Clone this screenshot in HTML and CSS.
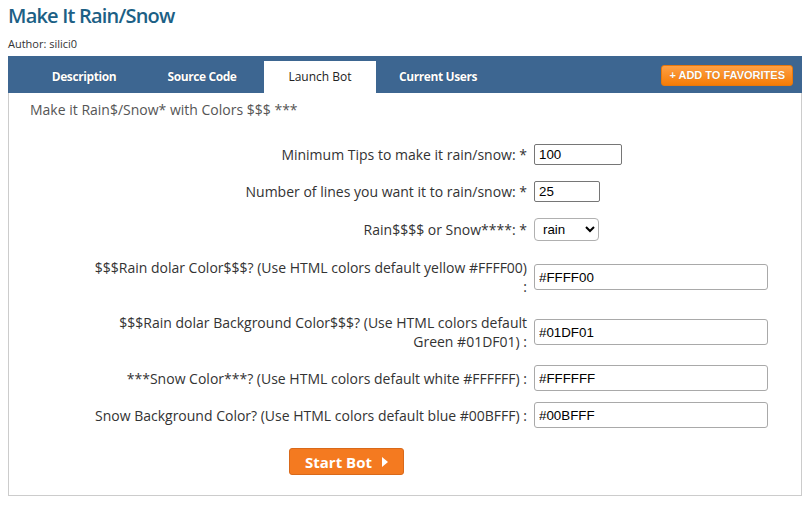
FILE: index.html
```html
<!DOCTYPE html>
<html lang="en">
<head>
    <meta charset="UTF-8">
    <meta name="viewport" content="width=device-width, initial-scale=1.0">
    <title>Make It Rain/Snow</title>
    <link rel="stylesheet" href="styles.css">
</head>
<body>
    <div class="page">
        <h1 class="bot-title">Make It Rain/Snow</h1>
        <p class="author">Author: silici0</p>

        <div class="bot-panel">
            <!-- Tabs -->
            <div class="tab-bar">
                <ul class="tabs">
                    <li><a href="#">Description</a></li>
                    <li><a href="#">Source Code</a></li>
                    <li class="active"><a href="#">Launch Bot</a></li>
                    <li><a href="#">Current Users</a></li>
                </ul>
                <a href="#" class="fav-btn">+ Add to favorites</a>
            </div>

            <!-- Launch form -->
            <div class="tab-content">
                <p class="intro">Make it Rain$/Snow* with Colors $$$ ***</p>

                <form class="bot-form">
                    <label for="minTips">Minimum Tips to make it rain/snow: *</label>
                    <div><input type="text" id="minTips" class="field field-short" value="100"></div>

                    <label for="lines">Number of lines you want it to rain/snow: *</label>
                    <div><input type="text" id="lines" class="field field-tiny" value="25"></div>

                    <label for="mode">Rain$$$$ or Snow****: *</label>
                    <div>
                        <select id="mode" class="field-select">
                            <option>rain</option>
                            <option>snow</option>
                        </select>
                    </div>

                    <label for="rainColor">$$$Rain dolar Color$$$? (Use HTML colors default yellow #FFFF00) :</label>
                    <div><input type="text" id="rainColor" class="field field-wide" value="#FFFF00"></div>

                    <label for="rainBg">$$$Rain dolar Background Color$$$? (Use HTML colors default Green #01DF01) :</label>
                    <div><input type="text" id="rainBg" class="field field-wide" value="#01DF01"></div>

                    <label for="snowColor">***Snow Color***? (Use HTML colors default white #FFFFFF) :</label>
                    <div><input type="text" id="snowColor" class="field field-wide" value="#FFFFFF"></div>

                    <label for="snowBg">Snow Background Color? (Use HTML colors default blue #00BFFF) :</label>
                    <div><input type="text" id="snowBg" class="field field-wide" value="#00BFFF"></div>
                </form>

                <button type="button" class="start-btn">
                    Start Bot
                    <svg width="6" height="10" viewBox="0 0 6 10"><path d="M0 0 L6 5 L0 10 Z" fill="#fff"/></svg>
                </button>
            </div>
        </div>
    </div>
</body>
</html>
```

FILE: styles.css
```css
:root {
    --title-color: #1c6085;
    --text-color: #333333;
    --muted-color: #555555;
    --tab-bar-bg: #3d6691;
    --panel-border: #cccccc;
    --orange: #f47a20;
}

body {
    margin: 0;
    font-family: 'Open Sans', sans-serif;
    color: var(--text-color);
    background: #ffffff;
}

.page {
    padding: 6px 8px;
    width: 794px;
}

.bot-title {
    margin: 0 0 11px;
    font-size: 20px;
    line-height: 20px;
    font-weight: 600;
    letter-spacing: -0.8px;
    color: var(--title-color);
}

.author {
    margin: 0 0 5px;
    font-size: 11px;
    line-height: 14px;
}

/* Tabs */
.tab-bar {
    display: flex;
    justify-content: space-between;
    align-items: flex-start;
    height: 37px;
    padding: 5px 9px 0 20px;
    box-sizing: border-box;
    background-color: var(--tab-bar-bg);
}

.tabs {
    display: flex;
    gap: 6px;
    margin: 0;
    padding: 0;
    list-style: none;
}

.tabs li a {
    display: block;
    width: 112px;
    height: 32px;
    line-height: 32px;
    text-align: center;
    font-size: 12px;
    font-weight: 700;
    letter-spacing: -0.4px;
    color: #ffffff;
    text-decoration: none;
    text-shadow: 0 0 1px rgba(0, 0, 0, 0.4);
}

.tabs li.active a {
    background: #ffffff;
    color: #222222;
    font-weight: 400;
    letter-spacing: 0;
    text-shadow: none;
}

.fav-btn {
    margin-top: 4px;
    height: 21px;
    line-height: 19px;
    padding: 0 7px;
    box-sizing: border-box;
    border: 1px solid #e8780c;
    border-radius: 3px;
    background: linear-gradient(#ffa044, #f57c06);
    font-family: 'Liberation Sans', Arial, sans-serif;
    font-size: 11px;
    font-weight: 700;
    text-transform: uppercase;
    color: #ffffff;
    text-decoration: none;
    text-shadow: 0 0 1px rgba(0, 0, 0, 0.25);
}

/* Content */
.tab-content {
    border: 1px solid var(--panel-border);
    border-top: none;
    padding: 7px 21px 20px;
}

.intro {
    margin: 0 0 22px;
    font-size: 14px;
    line-height: 19px;
    color: var(--muted-color);
}

.bot-form {
    display: grid;
    grid-template-columns: 436px auto;
    grid-auto-rows: minmax(26px, auto);
    column-gap: 7px;
    row-gap: 11px;
    align-items: center;
    margin-left: 61px;
}

.bot-form label {
    padding: 3px 0;
    text-align: right;
    font-size: 14px;
    line-height: 19px;
    color: var(--text-color);
}

.bot-form div {
    display: flex;
}

.field {
    height: 21px;
    padding: 1px 4px;
    box-sizing: border-box;
    border: 1px solid #767676;
    border-radius: 2px;
    font-family: 'Liberation Sans', Arial, sans-serif;
    font-size: 13.33px;
    color: #000000;
}

.field-short {
    width: 88px;
}

.field-tiny {
    width: 66px;
}

.field-wide {
    width: 234px;
    height: 26px;
    border-color: #a9a9a9;
    border-radius: 3px;
}

.field-select {
    width: 65px;
    height: 23px;
    margin: 3px 0;
    padding: 0 2px 0 4px;
    border: 1px solid #b0b0b0;
    border-radius: 4px;
    background: #ffffff;
    font-family: 'Liberation Sans', Arial, sans-serif;
    font-size: 13.33px;
    color: #000000;
}

.start-btn {
    display: flex;
    align-items: center;
    justify-content: center;
    gap: 10px;
    width: 115px;
    height: 27px;
    margin: 20px 0 0 259px;
    padding: 0;
    border: 1px solid #d9691a;
    border-radius: 3px;
    background-color: var(--orange);
    font-family: 'Open Sans', sans-serif;
    font-size: 15px;
    font-weight: 700;
    color: #ffffff;
    cursor: pointer;
}
```
